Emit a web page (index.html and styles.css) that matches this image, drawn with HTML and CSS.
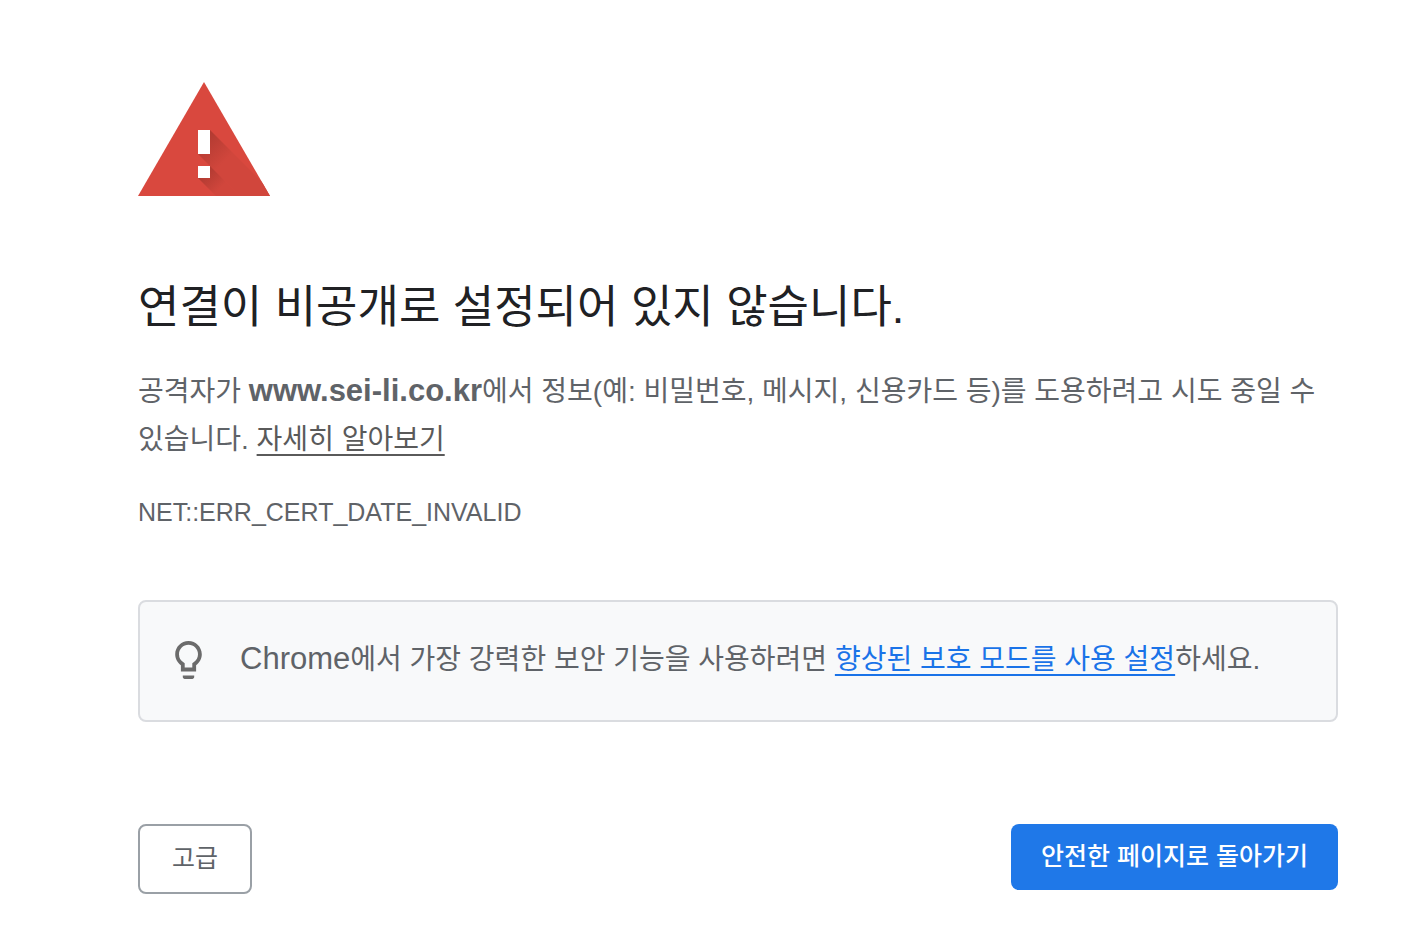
FILE: index.html
```html
<!DOCTYPE html>
<html lang="ko">
<head>
    <meta charset="UTF-8">
    <meta name="viewport" content="width=device-width, initial-scale=1.0">
    <title>개인 정보 보호 오류</title>
    <link rel="stylesheet" href="styles.css">
</head>
<body>
    <main class="interstitial">
        <svg class="warning-icon" viewBox="0 0 132 114" role="img" aria-label="경고">
            <defs>
                <clipPath id="triangle"><path d="M66 0 L132 114 H0 Z"/></clipPath>
                <linearGradient id="barShade" gradientUnits="userSpaceOnUse" x1="60" y1="60" x2="83" y2="83">
                    <stop offset="0" stop-color="#b03a31"/>
                    <stop offset="1" stop-color="#d1463c"/>
                </linearGradient>
                <linearGradient id="dotShade" gradientUnits="userSpaceOnUse" x1="78" y1="78" x2="94" y2="94">
                    <stop offset="0" stop-color="#b03a31"/>
                    <stop offset="1" stop-color="#d1463c"/>
                </linearGradient>
            </defs>
            <path d="M66 0 L132 114 H0 Z" fill="#d9483e"/>
            <!-- Long shadows of the exclamation mark -->
            <g clip-path="url(#triangle)">
                <path d="M72 48 L138 114 H102 L60 72 Z" fill="url(#barShade)"/>
                <path d="M72 84 L102 114 H78 L60 96 Z" fill="url(#dotShade)"/>
            </g>
            <path d="M60 48h12v24H60z M60 84h12v12H60z" fill="#fff"/>
        </svg>

        <h1 class="title">연결이 비공개로 설정되어 있지 않습니다.</h1>
        <p class="message">공격자가 <strong class="latin">www.sei-li.co.kr</strong>에서 정보(예: 비밀번호, 메시지, 신용카드 등)를 도용하려고 시도 중일 수 있습니다. <a class="learn-more" href="#">자세히 알아보기</a></p>
        <p class="error-code">NET::ERR_CERT_DATE_INVALID</p>

        <div class="suggestion">
            <svg class="bulb-icon" viewBox="5 2 14 20" aria-hidden="true">
                <path fill="#6b6b6b" d="M9 21c0 .55.45 1 1 1h4c.55 0 1-.45 1-1v-.8H9v.8zm3-19C8.140 2 5 5.140 5 9c0 2.380 1.190 4.470 3 5.740V18h8v-3.260c1.810-1.270 3-3.360 3-5.740 0-3.860-3.140-7-7-7zm2.850 11.100l-.85.6V16h-4v-2.300l-.85-.6A5 5 0 0 1 7 9c0-2.760 2.240-5 5-5s5 2.240 5 5c0 1.630-.8 3.160-2.150 4.100z"/>
            </svg>
            <p><span class="latin">Chrome</span>에서 가장 강력한 보안 기능을 사용하려면 <a class="enhanced" href="#">향상된 보호 모드를 사용 설정</a>하세요.</p>
        </div>

        <div class="actions">
            <button class="btn btn-secondary" type="button">고급</button>
            <button class="btn btn-primary" type="button">안전한 페이지로 돌아가기</button>
        </div>
    </main>
</body>
</html>
```
FILE: styles.css
```css
* {
    box-sizing: border-box;
}
body {
    margin: 0;
    background: #fff;
    color: #5f6368;
    font-family: "Liberation Sans", "Noto Sans CJK KR", sans-serif;
    font-size: 28px;
    line-height: 48px;
    word-break: keep-all;
}
.interstitial {
    max-width: 1278px;
    margin: 0 auto;
    padding: 82px 9px 42px 69px;
}
h1, p {
    margin: 0;
}
.latin {
    font-size: 31px;
    line-height: 1;
}
.warning-icon {
    display: block;
    width: 132px;
    height: 114px;
    margin-bottom: 83px;
}
.title {
    margin-bottom: 31px;
    color: #202124;
    font-size: 45px;
    font-weight: 400;
    line-height: 58px;
}
.message {
    margin-bottom: 24px;
}
.learn-more {
    color: #5a5a5a;
}
.error-code {
    margin-bottom: 64px;
    font-size: 25px;
}
.suggestion {
    display: flex;
    align-items: center;
    gap: 38px;
    margin-bottom: 102px;
    padding: 34px 35px 36px;
    border: 2px solid #dadce0;
    border-radius: 8px;
    background: #f8f9fa;
}
.bulb-icon {
    flex: none;
    width: 27px;
    height: 38px;
}
.enhanced {
    color: #1a73e8;
}
.learn-more,
.enhanced {
    text-decoration-thickness: 2px;
    text-decoration-skip-ink: none;
    text-underline-offset: 5px;
}
.actions {
    display: flex;
    justify-content: space-between;
    align-items: flex-start;
}
.btn {
    border-radius: 8px;
    font-family: inherit;
    font-size: 25px;
    cursor: pointer;
}
.btn-secondary {
    height: 70px;
    padding: 0 32px 6px;
    border: 2px solid #9aa0a6;
    background: #fff;
    color: #5f6368;
}
.btn-primary {
    height: 66px;
    padding: 0 30px 6px;
    border: 0;
    background: #1f78e8;
    color: #fff;
    font-weight: 500;
}
```
